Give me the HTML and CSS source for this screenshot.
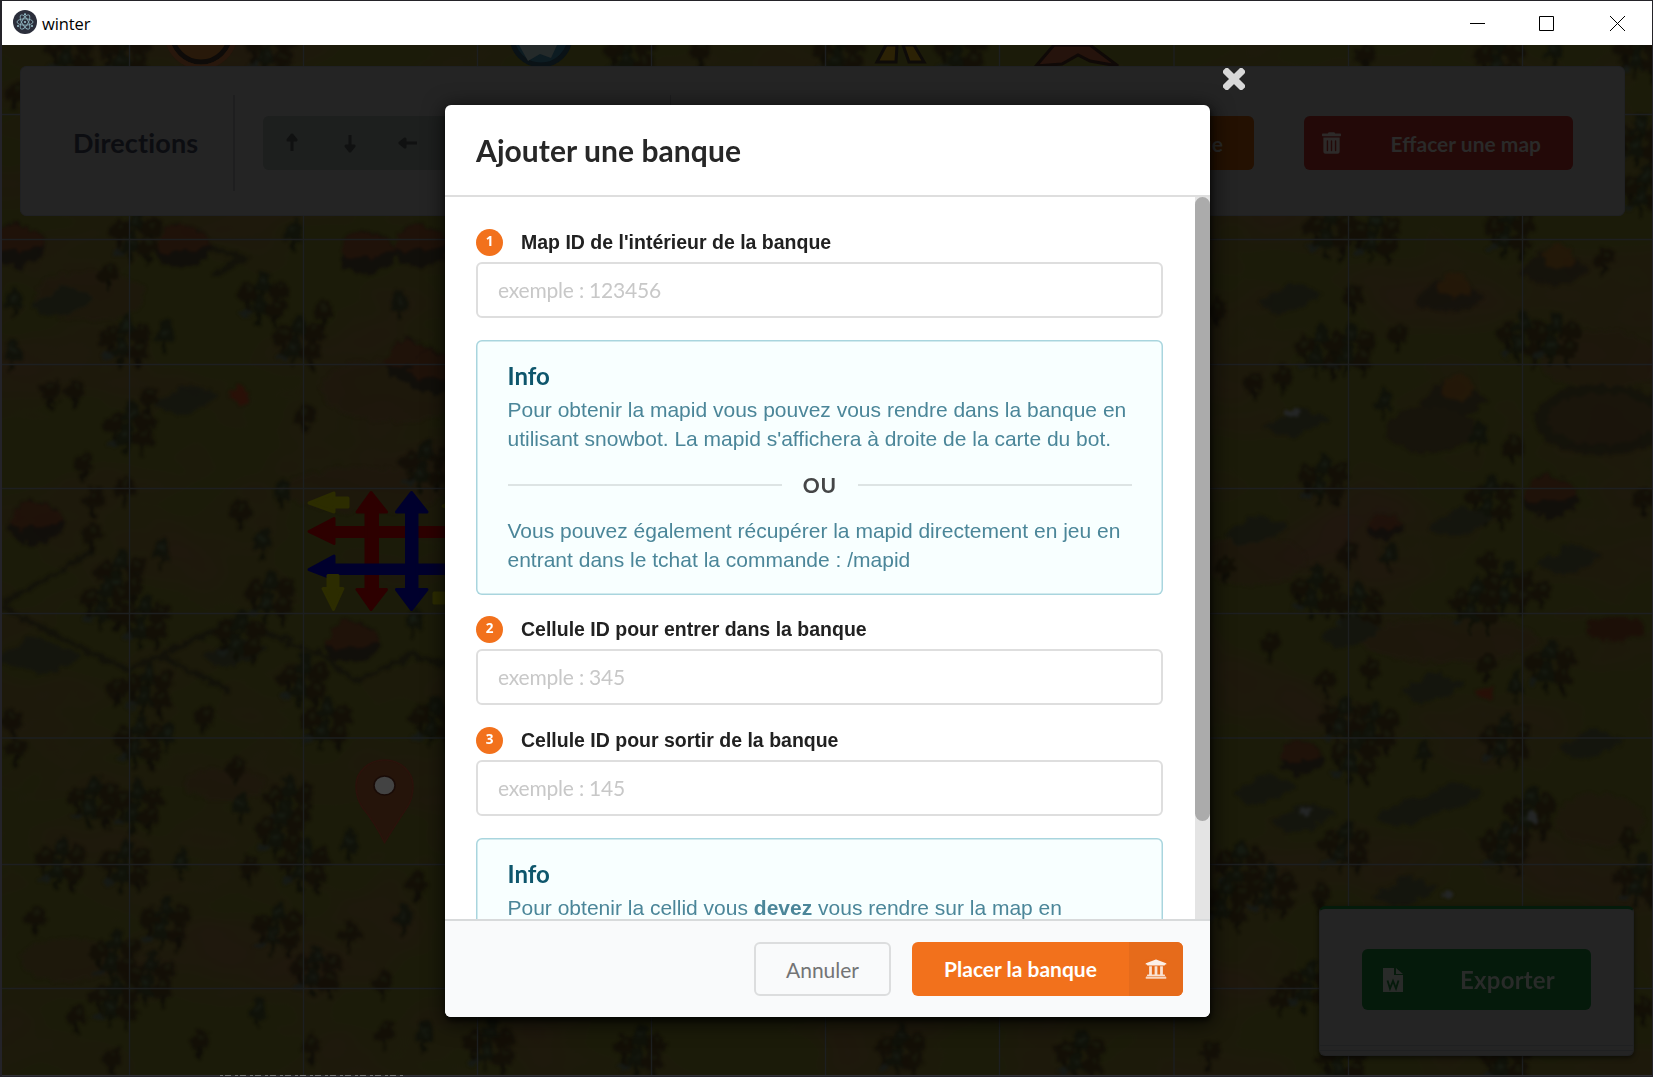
FILE: index.html
```html
<!DOCTYPE html>
<html lang="fr">
<head>
<meta charset="utf-8">
<title>winter</title>
<link rel="stylesheet" href="styles.css">
</head>
<body>
<div class="window">
  <header class="titlebar">
    <svg class="app-icon" viewBox="0 0 24 24"><circle cx="12" cy="12" r="12" fill="#2b2e3b"/><g fill="none" stroke="#9fc9d4" stroke-width=".9" opacity=".85"><ellipse cx="12" cy="12" rx="3.2" ry="8" transform="rotate(-30 12 12)"/><ellipse cx="12" cy="12" rx="3.2" ry="8" transform="rotate(30 12 12)"/><ellipse cx="12" cy="12" rx="3.2" ry="8" transform="rotate(90 12 12)"/></g><g fill="#9fc9d4"><circle cx="12" cy="12" r="1"/><circle cx="12" cy="4.2" r="1"/><circle cx="5" cy="16" r="1"/><circle cx="19" cy="16" r="1"/></g></svg>
    <span class="app-name">winter</span>
    <div class="window-controls">
      <svg viewBox="0 0 15 15"><path d="M0 7.5H15"/></svg>
      <svg viewBox="0 0 15 15"><path d="M.5 .5H14.5V14.5H.5Z"/></svg>
      <svg viewBox="0 0 15 15"><path d="M0 0L15 15M15 0L0 15"/></svg>
    </div>
  </header>
  <main class="workspace">
    <svg class="map" viewBox="2 45 1650 1031" preserveAspectRatio="none">
      <defs>
        <filter id="soft" x="0" y="0" width="1" height="1" color-interpolation-filters="sRGB"><feTurbulence type="fractalNoise" baseFrequency=".12" numOctaves="2" seed="3" result="n"/><feDisplacementMap in="SourceGraphic" in2="n" scale="11" xChannelSelector="R" yChannelSelector="G"/><feGaussianBlur stdDeviation="1.5"/></filter>
        <filter id="ground" x="0" y="0" width="1" height="1" color-interpolation-filters="sRGB"><feTurbulence type="fractalNoise" baseFrequency=".007 .012" numOctaves="3" seed="8"/><feColorMatrix values="0 0 0 0 .125  0 0 0 0 .09  0 0 0 0 .055  2.2 0 0 0 -.95"/></filter>
        <g id="tree"><path d="M-2 4L-1 17H2L3 4Z" fill="#0d0b06"/><path d="M-10 1Q-10-6-4-7Q-3-14 3-12Q11-11 9-4Q13 2 7 6Q3 3 0 6Q-7 9-10 1Z" fill="#120e07"/><circle cx="2" cy="-6" r="3" fill="#18180c"/></g>
        <g id="pine"><path d="M-1 0V19H2V0Z" fill="#0c0d06"/><path d="M-8 8Q-9-1-4-3Q-4-14 3-13Q9-10 7-3Q12 4 7 9Q0 5-8 8Z" fill="#0f110a"/><circle cx="1" cy="-2" r="3" fill="#151a13"/></g>
        <g id="grove"><use href="#tree" x="-16" y="-2"/><use href="#pine" x="0" y="-13"/><use href="#tree" x="15" y="-5"/><use href="#pine" x="-5" y="9"/><use href="#tree" x="12" y="13"/><ellipse cx="-17" cy="17" rx="6" ry="3" fill="#161a18"/></g>
        <g id="house"><path d="M-26 5L-18-14L-5-21L22-11L29 2L24 15L2 25L-23 18Z" fill="#100d0b"/><path d="M-27 3L-17-14L-5-20L22-10L28 1L8 8L-4 5L-15 10Z" fill="#21110a"/></g>
        <g id="hill"><path d="M-34 5Q-20-14-3-18Q19-12 34 2Q18 20-8 17Q-28 16-34 5Z" fill="#15120c"/><path d="M-12-4Q-10-21 5-24Q21-18 18-2Q4 7-12-4Z" fill="#251809"/></g>
        <path id="rock" d="M-32 7Q-22-2-12-3Q-5-15 8-12L32-2Q22 8 13 10Q-2 19-18 16Z" fill="#14150f"/>
      </defs>
      <rect x="2" y="45" width="1650" height="1031" fill="#1b1b09"/>
      <rect x="2" y="45" width="1650" height="1031" filter="url(#ground)"/>
      <g filter="url(#soft)" opacity=".85">
        <rect x="2" y="45" width="1650" height="1031" fill="none"/>
        <g fill="#20180f" opacity=".6"><ellipse cx="90" cy="296" rx="55" ry="25"/><ellipse cx="395" cy="390" rx="75" ry="32"/><ellipse cx="365" cy="490" rx="80" ry="23"/><ellipse cx="225" cy="785" rx="40" ry="17"/><ellipse cx="70" cy="960" rx="50" ry="22"/><ellipse cx="1600" cy="360" rx="60" ry="30"/><ellipse cx="1250" cy="560" rx="55" ry="25"/><ellipse cx="1450" cy="640" rx="90" ry="22"/><ellipse cx="1600" cy="820" rx="45" ry="26"/></g>
        <g fill="none" stroke="#12110a" stroke-width="5"><path d="M2 603L62 570L92 551M2 606L70 643L128 669L158 657L235 620L325 657L355 681L413 655L445 665M163 657L228 690"/><path d="M205 246L244 258L212 276"/></g>
        <use href="#house" x="35" y="520"/><use href="#house" x="352" y="640"/><use href="#house" x="182" y="244"/><use href="#house" x="367" y="250"/><use href="#house" x="17" y="243"/><use href="#house" x="420" y="243"/><use href="#house" x="412" y="359"/><use href="#house" x="435" y="370"/>
        <use href="#rock" x="186" y="397"/><use href="#rock" x="30" y="650"/><use href="#rock" x="50" y="657"/><use href="#rock" x="236" y="650"/><use href="#rock" x="63" y="299"/>
        <use href="#tree" x="108" y="275"/><use href="#pine" x="13" y="300"/><use href="#pine" x="12" y="352"/><use href="#grove" x="125" y="340"/><use href="#pine" x="164" y="334"/><use href="#grove" x="263" y="297"/><use href="#tree" x="323" y="313"/><use href="#pine" x="399" y="303"/><use href="#grove" x="298" y="340"/><use href="#tree" x="50" y="393"/><use href="#tree" x="74" y="392"/><use href="#grove" x="130" y="427"/><use href="#tree" x="148" y="398"/><use href="#tree" x="83" y="465"/><use href="#tree" x="304" y="417"/><use href="#grove" x="425" y="465"/><use href="#grove" x="135" y="235"/><use href="#pine" x="293" y="233"/>
        <use href="#tree" x="92" y="500"/><use href="#tree" x="124" y="490"/><use href="#tree" x="91" y="535"/><use href="#grove" x="120" y="575"/><use href="#grove" x="105" y="602"/><use href="#grove" x="144" y="620"/><use href="#pine" x="161" y="550"/><use href="#tree" x="240" y="513"/><use href="#pine" x="262" y="541"/><use href="#pine" x="281" y="491"/><use href="#grove" x="270" y="595"/><use href="#grove" x="240" y="636"/><use href="#pine" x="413" y="620"/><use href="#grove" x="303" y="680"/><use href="#tree" x="116" y="690"/><use href="#grove" x="148" y="688"/><use href="#tree" x="204" y="718"/><use href="#grove" x="326" y="723"/><use href="#grove" x="139" y="741"/><use href="#pine" x="166" y="735"/><use href="#tree" x="11" y="722"/><use href="#tree" x="16" y="750"/><use href="#tree" x="236" y="770"/><use href="#grove" x="93" y="800"/><use href="#grove" x="137" y="805"/><use href="#grove" x="289" y="801"/><use href="#grove" x="280" y="831"/><use href="#pine" x="240" y="805"/><use href="#pine" x="348" y="843"/><use href="#grove" x="435" y="720"/>
        <use href="#grove" x="125" y="865"/><use href="#grove" x="61" y="862"/><use href="#pine" x="180" y="862"/><use href="#tree" x="249" y="868"/><use href="#grove" x="304" y="864"/><use href="#tree" x="35" y="919"/><use href="#grove" x="165" y="922"/><use href="#grove" x="115" y="955"/><use href="#grove" x="150" y="978"/><use href="#tree" x="76" y="1018"/><use href="#grove" x="115" y="1000"/><use href="#grove" x="277" y="928"/><use href="#tree" x="349" y="935"/><use href="#grove" x="316" y="970"/><use href="#pine" x="257" y="1010"/><use href="#tree" x="199" y="1042"/><use href="#tree" x="112" y="1060"/><use href="#tree" x="310" y="1047"/><use href="#tree" x="382" y="984"/><use href="#pine" x="403" y="917"/><use href="#tree" x="416" y="885"/><use href="#tree" x="385" y="1033"/><use href="#pine" x="424" y="1033"/>
        <use href="#grove" x="1330" y="230"/><use href="#grove" x="1375" y="235"/><use href="#grove" x="1509" y="230"/><use href="#rock" x="1290" y="296"/><use href="#tree" x="1352" y="297"/><use href="#hill" x="1450" y="295"/><use href="#hill" x="1555" y="267"/><use href="#tree" x="1603" y="260"/><use href="#tree" x="1216" y="311"/><use href="#grove" x="1320" y="350"/><use href="#grove" x="1350" y="348"/><use href="#tree" x="1397" y="336"/><use href="#grove" x="1522" y="337"/><use href="#grove" x="1555" y="338"/><use href="#tree" x="1254" y="385"/><use href="#tree" x="1282" y="378"/><use href="#rock" x="1296" y="420"/><use href="#pine" x="1383" y="402"/><use href="#hill" x="1454" y="398"/><ellipse cx="1430" cy="430" rx="44" ry="23" fill="#17130c"/><use href="#pine" x="1478" y="435"/><ellipse cx="1602" cy="420" rx="68" ry="35" fill="#14120b"/><ellipse cx="1602" cy="419" rx="55" ry="26" fill="#1a150c"/><use href="#tree" x="1512" y="448"/><use href="#grove" x="1323" y="479"/><use href="#grove" x="1490" y="500"/><use href="#house" x="1550" y="494"/><use href="#house" x="1385" y="525" transform="translate(554 210) scale(.6)"/><use href="#rock" x="1255" y="528"/><use href="#rock" x="1460" y="520"/><use href="#tree" x="1643" y="500"/>
        <use href="#tree" x="1347" y="555"/><use href="#pine" x="1388" y="555"/><use href="#tree" x="1225" y="568"/><use href="#grove" x="1315" y="591"/><use href="#grove" x="1358" y="607"/><use href="#tree" x="1487" y="563"/><use href="#grove" x="1508" y="587"/><use href="#grove" x="1475" y="604"/><use href="#tree" x="1540" y="594"/><use href="#rock" x="1570" y="557"/><use href="#rock" x="1350" y="630"/><ellipse cx="1615" cy="629" rx="30" ry="12" fill="#1d0e08"/><use href="#rock" x="1432" y="685"/><use href="#tree" x="1486" y="665"/><path d="M1474 690L1494 684L1491 702Z" fill="#2a0e08"/><use href="#pine" x="1515" y="685"/><use href="#grove" x="1550" y="665"/><use href="#tree" x="1269" y="645"/><use href="#tree" x="1325" y="682"/><use href="#tree" x="1370" y="671"/><use href="#grove" x="1344" y="720"/><use href="#grove" x="1373" y="727"/><use href="#house" x="1301" y="756" transform="translate(260 151) scale(.8)"/><use href="#grove" x="1354" y="756"/><use href="#pine" x="1423" y="752"/><use href="#grove" x="1505" y="740"/><use href="#rock" x="1590" y="742"/><use href="#rock" x="1264" y="787"/><use href="#rock" x="1450" y="795"/><use href="#rock" x="1410" y="809"/><use href="#rock" x="1303" y="815"/><use href="#grove" x="1530" y="812"/><use href="#grove" x="1345" y="846"/><use href="#grove" x="1505" y="846"/><use href="#tree" x="1627" y="840"/><use href="#grove" x="1240" y="865"/><use href="#grove" x="1270" y="890"/><use href="#grove" x="1225" y="902"/><use href="#grove" x="1640" y="880"/><use href="#tree" x="1320" y="895"/><use href="#rock" x="1405" y="889"/><use href="#grove" x="1309" y="985"/><use href="#tree" x="1280" y="1000"/><use href="#tree" x="1209" y="1053"/><use href="#grove" x="1342" y="1060"/><use href="#grove" x="1505" y="1060"/><use href="#tree" x="1643" y="1010"/>
        <use href="#grove" x="70" y="50"/><use href="#grove" x="125" y="52"/><use href="#grove" x="270" y="48"/><use href="#grove" x="630" y="52"/><use href="#tree" x="700" y="52"/><use href="#grove" x="840" y="52"/><use href="#grove" x="960" y="50"/><use href="#tree" x="1365" y="55"/><use href="#grove" x="1500" y="58"/><use href="#pine" x="1553" y="50"/><use href="#grove" x="1640" y="52"/><use href="#grove" x="1640" y="140"/><use href="#grove" x="1645" y="190"/><use href="#tree" x="14" y="95"/><use href="#grove" x="640" y="1050"/><use href="#grove" x="900" y="1050"/><use href="#grove" x="490" y="1045"/><use href="#grove" x="1080" y="1055"/>
        <g fill="#26282c"><ellipse cx="1292" cy="413" rx="8" ry="4"/><ellipse cx="1305" cy="812" rx="7" ry="5"/><ellipse cx="1447" cy="894" rx="6" ry="4"/><ellipse cx="1532" cy="817" rx="6" ry="5"/></g>
        <path d="M230 393L240 385L250 394L246 406L236 401Z" fill="#2c0f08"/>
      </g>
      <circle cx="201" cy="33" r="29" fill="#28190a" stroke="#0e0b09" stroke-width="5"/><circle cx="201" cy="33" r="34" fill="none" stroke="#28170c" stroke-width="5"/>
      <circle cx="541" cy="36" r="29" fill="#0d1c22" stroke="#0a1216" stroke-width="5"/><path d="M519 45H557L551 58L540 54L528 61Z" fill="#242a2a"/>
      <path d="M877 62L886 45H897L896 62ZM903 45H914L924 62H909Z" fill="#2c2205" stroke="#0e0b09" stroke-width="3"/><path d="M1036 66L1054 45H1090L1118 66L1090 61L1078 55L1062 64Z" fill="#25130c" stroke="#0f0907" stroke-width="3"/>
      <path d="M129.5 45V1076M303.5 45V1076M477.5 45V1076M651.5 45V1076M825.5 45V1076M999.5 45V1076M1174 45V1076M1348.5 45V1076M1522.5 45V1076M2 114.5H1652M2 239.5H1652M2 364.5H1652M2 488.5H1652M2 613.5H1652M2 738H1652M2 864.5H1652M2 988.5H1652" stroke="#1d1f20" stroke-width="1.4" fill="none"/>
      <g stroke-linejoin="round" stroke-width="3"><g fill="#2c2c00" stroke="#2c2c00"><path d="M309 503L334 493V498H348V507H334V512Z"/><path d="M434 593H450V603H434Z"/><path d="M443 506L452 501V511Z"/></g><g fill="#2d0000" stroke="#2d0000"><path d="M309 531.5L334 518.5V527.5H450V536.5H334V543.5Z"/><path d="M371 492.5L386.500 512H377.500V589.500H386.500L371 609.500L357 589.500H366V512H357Z"/></g><g fill="#00002d" stroke="#00002d"><path d="M309 569.500L334 556V565H450V573.500H334V579Z"/><path d="M411.500 492.500L427 512H417V589.500H427L411.500 609.500L396.500 589.500H406.500V512H396.500Z"/></g><path d="M328 575.500H338V588.500H343L333.500 609.500L323 588.500H328Z" fill="#2c2c00" stroke="#2c2c00"/></g>
      <path d="M384.500 842.500Q376 824 362 807Q356 797 356 786A28.500 26 0 0 1 413 786Q413 797 408 806Q392 830 384.500 842.500Z" fill="#25140a" stroke="#2b120b" stroke-width="1.500"/><ellipse cx="384.500" cy="785.500" rx="10.500" ry="9.500" fill="#434343" stroke="#190b07" stroke-width="1.500"/>
      <path d="M2 1075.500H1652" stroke="#303036"/><path d="M220 1075.500H405" stroke="#75777a" stroke-dasharray="3 2 6 4"/>
    </svg>

    <section class="toolbar">
      <h3 class="toolbar-title">Directions</h3>
      <div class="direction-group">
        <svg class="arrow" viewBox="0 0 20 20"><path d="M10 18V4M6 7L10 2L14 7Z"/></svg>
        <svg class="arrow" viewBox="0 0 20 20"><path d="M10 2V16M6 13L10 18L14 13Z"/></svg>
        <svg class="arrow" viewBox="0 0 20 20"><path d="M19 10H4M7 6L2 10L7 14Z"/></svg>
      </div>
      <div class="toolbar-rule"></div>
      <button class="tool-button bank">Placer une banque</button>
      <button class="tool-button erase"><svg viewBox="0 0 448 512"><path d="M32 464a48 48 0 0 0 48 48h288a48 48 0 0 0 48-48V128H32zm272-256a16 16 0 0 1 32 0v224a16 16 0 0 1-32 0zm-96 0a16 16 0 0 1 32 0v224a16 16 0 0 1-32 0zm-96 0a16 16 0 0 1 32 0v224a16 16 0 0 1-32 0zM432 32H312l-9.400-18.700A24 24 0 0 0 281.100 0H166.800a23.720 23.720 0 0 0-21.400 13.300L136 32H16A16 16 0 0 0 0 48v32a16 16 0 0 0 16 16h416a16 16 0 0 0 16-16V48a16 16 0 0 0-16-16z"/></svg><span>Effacer une map</span></button>
    </section>

    <aside class="export-panel">
      <button class="export-button"><svg viewBox="0 0 20 24"><path d="M0 0H11V7H20V24H0ZM13 0L20 6H13Z"/><path class="word-mark" d="M4.500 12.500L7 20.500L10 13L13 20.500L15.500 12.500"/></svg><span>Exporter</span></button>
    </aside>

    <svg class="close" viewBox="-12 68 376 376"><path d="M242.720 256l100.070-100.070c12.280-12.280 12.280-32.190 0-44.480l-22.240-22.240c-12.280-12.280-32.190-12.280-44.480 0L176 189.280 75.930 89.210c-12.280-12.280-32.190-12.280-44.480 0L9.210 111.450c-12.280 12.280-12.280 32.190 0 44.480L109.280 256 9.210 356.070c-12.280 12.280-12.280 32.190 0 44.480l22.240 22.240c12.280 12.280 32.200 12.280 44.480 0L176 322.720l100.070 100.070c12.280 12.280 32.200 12.280 44.480 0l22.240-22.240c12.280-12.280 12.280-32.190 0-44.480L242.720 256z"/></svg>

    <div class="modal">
      <h2 class="modal-title">Ajouter une banque</h2>
      <div class="modal-scroll">
        <form class="modal-content">
          <label class="field"><span class="field-label"><b class="badge">1</b>Map ID de l'intérieur de la banque</span><input placeholder="exemple : 123456"></label>
          <div class="message">
            <h4>Info</h4>
            <p>Pour obtenir la mapid vous pouvez vous rendre dans la banque en<br>utilisant snowbot. La mapid s'affichera à droite de la carte du bot.</p>
            <div class="divider">OU</div>
            <p class="alternative">Vous pouvez également récupérer la mapid directement en jeu en<br>entrant dans le tchat la commande : /mapid</p>
          </div>
          <label class="field"><span class="field-label"><b class="badge">2</b>Cellule ID pour entrer dans la banque</span><input placeholder="exemple : 345"></label>
          <label class="field"><span class="field-label"><b class="badge">3</b>Cellule ID pour sortir de la banque</span><input placeholder="exemple : 145"></label>
          <div class="message">
            <h4>Info</h4>
            <p>Pour obtenir la cellid vous <b>devez</b> vous rendre sur la map en</p>
          </div>
        </form>
        <div class="scrollbar"><div class="thumb"></div></div>
      </div>
      <footer class="modal-actions">
        <button class="cancel">Annuler</button>
        <button class="confirm"><span>Placer la banque</span><i><svg viewBox="0 0 512 512"><path d="M496 128v16a8 8 0 0 1-8 8h-24v12c0 6.627-5.373 12-12 12H60c-6.627 0-12-5.373-12-12v-12H24a8 8 0 0 1-8-8v-16a8 8 0 0 1 4.941-7.392l232-88a7.996 7.996 0 0 1 6.118 0l232 88A8 8 0 0 1 496 128z"/><path opacity=".9" d="M96 192v192H60c-6.627 0-12 5.373-12 12v20h416v-20c0-6.627-5.373-12-12-12h-36V192h-64v192h-64V192h-64v192h-64V192H96z"/><path opacity=".8" d="M472 432H40c-13.255 0-24 10.745-24 24v16a8 8 0 0 0 8 8h464a8 8 0 0 0 8-8v-16c0-13.255-10.745-24-24-24z"/></svg></i></button>
      </footer>
    </div>
  </main>
</div>
</body>
</html>
```
FILE: styles.css
```css
* { box-sizing: border-box; }
body { margin: 0; overflow: hidden; background: #242329; font-family: Lato, "Liberation Sans", sans-serif; }
h2, h3, h4, p { margin: 0; }
button { margin: 0; padding: 0; border: 0; font: 700 21px Lato, sans-serif; }
svg { display: block; }

.window { width: 1653px; height: 1077px; padding: 1px 1px 1px 2px; display: grid; grid-template-rows: 44px 1fr; background: #242329; }
.titlebar { display: flex; align-items: center; padding: 0 27px 0 11px; background: #fff; }
.app-icon { width: 24px; height: 24px; margin-bottom: 2px; }
.app-name { margin-left: 5px; padding-top: 1px; font: 16.5px/24px "Open Sans", "Noto Sans", sans-serif; letter-spacing: -.1px; color: #000; }
.window-controls { display: flex; gap: 56px; margin-left: auto; }
.window-controls svg { width: 15px; height: 15px; fill: none; stroke: #000; stroke-width: 1; }
.window-controls svg:first-child { margin-right: -2px; }

.workspace { position: relative; padding: 21px 27px 0 18px; overflow: hidden; }
.map { position: absolute; inset: 0; width: 100%; height: 100%; }

.toolbar { position: relative; display: flex; align-items: center; height: 150px; padding: 4px 51px 0 52px; border: 1px solid #202123; border-radius: 6px; background: #242424; }
.toolbar-title { width: 162px; height: 96px; border-right: 2px solid #1e1e1f; font-size: 27px; line-height: 96px; letter-spacing: .15px; color: #0c0d11; }
.direction-group { display: flex; align-items: center; gap: 38px; width: 360px; height: 54px; margin-left: 28px; padding-left: 19px; border-radius: 6px; background: #1d1f1e; }
.arrow { width: 20px; height: 20px; fill: #101111; stroke: #101111; stroke-width: 3; stroke-linejoin: round; }
.toolbar-rule { width: 1px; height: 96px; margin-left: 47px; background: #1d1d1e; }
.tool-button { height: 54px; border-radius: 6px; color: #2a2a29; }
.tool-button.bank { width: 270px; margin-left: auto; padding-right: 31px; text-align: right; background: #241102; }
.tool-button.erase { display: flex; align-items: center; width: 269px; margin-left: 50px; padding: 0 32px 0 18px; justify-content: space-between; background: #230908; }
.tool-button.erase svg { width: 19px; height: 22px; fill: #2d2a29; }

.export-panel { position: absolute; right: 18px; bottom: 20px; display: flex; justify-content: center; width: 315px; height: 150px; padding-top: 40px; border: 1px solid #202122; border-top: 3px solid #041b0b; border-radius: 6px; background: linear-gradient(#242424 136px, #1f2021 136px, #1f2021 137px, #242424 137px, #242424 141px, #1f2021 141px, #1f2021 142px, #242424 142px); box-shadow: 0 2px 5px #0008; }
.export-button { display: flex; align-items: center; justify-content: space-between; width: 229px; height: 61px; padding: 0 36px 0 21px; border-radius: 6px; background: #051a0b; color: #292b29; font-size: 24px; letter-spacing: .2px; }
.export-button svg { width: 20px; height: 24px; fill: #292b29; }
.export-button .word-mark { fill: none; stroke: #051a0b; stroke-width: 1.8; }

.close { position: absolute; left: 1221px; top: 23px; width: 22px; height: 22px; fill: #d8d8d8; stroke: #d8d8d8; stroke-width: 28; stroke-linejoin: round; }

.modal { position: absolute; left: 443px; top: 60px; display: grid; grid-template-rows: 92px 722px 98px; width: 765px; height: 912px; overflow: hidden; border-radius: 6px; background: #fff; box-shadow: 1px 4px 5px #0009, 1px 4px 20px 3px #0009; }
.modal-title { padding-left: 31px; border-bottom: 2px solid #dedede; font-size: 30px; line-height: 90px; letter-spacing: .07px; color: #272727; }
.modal-scroll { display: grid; grid-template-columns: 1fr 15px; min-height: 0; }
.modal-content { height: 722px; overflow: hidden; padding: 32px 32px 0 31px; }
.scrollbar { background: #e4e4e4; }
.thumb { height: 624px; border-radius: 8px; background: #ababab; }

.field { display: block; margin-bottom: 22px; }
.field-label { display: flex; align-items: center; gap: 18px; height: 27px; margin-bottom: 6px; font: 700 19.5px/27px "Liberation Sans", Arial, sans-serif; color: #212121; }
.badge { width: 27px; height: 27px; border-radius: 50%; background: #f2711c; color: #fff; font: 700 13.5px/25px "Open Sans", sans-serif; text-align: center; }
input { display: block; width: 100%; height: 56px; padding: 0 20px 1px; border: 2px solid #dedede; border-radius: 6px; outline: 0; font: 21px Lato, sans-serif; letter-spacing: -.2px; background: #fff; }
input::placeholder { color: #c8c8c8; opacity: 1; }

.message { height: 255px; margin-bottom: 21px; padding: 20px 31px 0 31.5px; border-radius: 6px; background: #f8ffff; box-shadow: inset 0 0 0 1.5px #a9d5de; color: #4b8699; }
.message h4 { height: 35px; font-size: 24px; line-height: 32px; color: #0e566c; }
.message p { font: 21px/29px "Liberation Sans", Arial, sans-serif; white-space: nowrap; }
.divider { display: flex; align-items: center; gap: 21px; height: 32px; margin: 16px 0 15px; font-size: 21px; line-height: 30px; font-weight: 700; letter-spacing: .8px; color: #454647; }
.divider::before, .divider::after { content: ""; flex: 1; height: 2px; background: #dde4e4; }

.modal-actions { display: flex; align-items: flex-start; justify-content: flex-end; gap: 21px; padding: 21px 27px 0; border-top: 2px solid #d8dadb; background: #f9fafb; }
.cancel { width: 137px; height: 54px; border: 2px solid #dcddde; border-radius: 6px; background: transparent; font-weight: 400; color: #737475; }
.confirm { display: flex; width: 271px; height: 54px; overflow: hidden; border-radius: 6px; background: #f2711c; line-height: 54px; color: #fff; }
.confirm span { width: 217px; text-align: center; }
.confirm i { display: grid; place-items: center; width: 54px; height: 54px; background: #e66b1b; }
.confirm svg { width: 22px; height: 22px; fill: #fff; opacity: .9; }
```
